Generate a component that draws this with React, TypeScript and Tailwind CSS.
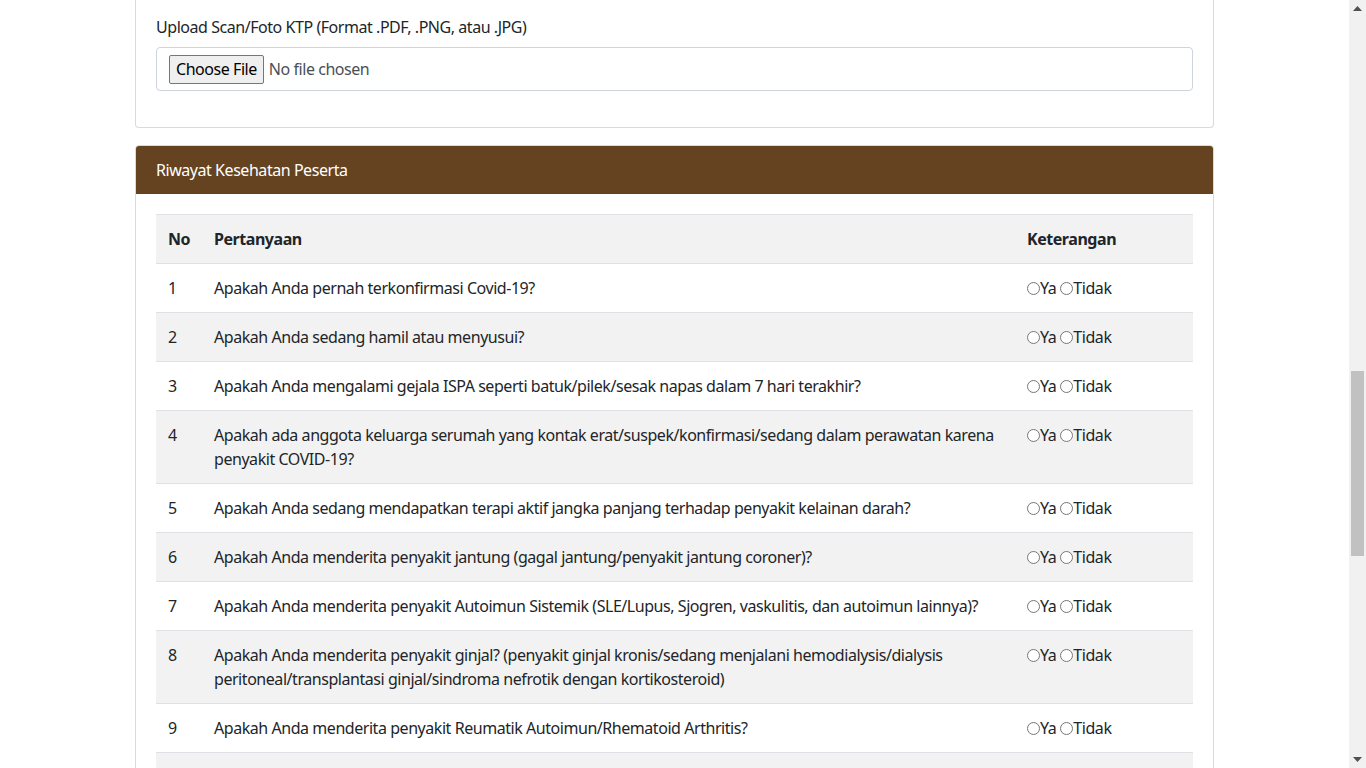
const questions: string[] = [
  "Apakah Anda pernah terkonfirmasi Covid-19?",
  "Apakah Anda sedang hamil atau menyusui?",
  "Apakah Anda mengalami gejala ISPA seperti batuk/pilek/sesak napas dalam 7 hari terakhir?",
  "Apakah ada anggota keluarga serumah yang kontak erat/suspek/konfirmasi/sedang dalam perawatan karena penyakit COVID-19?",
  "Apakah Anda sedang mendapatkan terapi aktif jangka panjang terhadap penyakit kelainan darah?",
  "Apakah Anda menderita penyakit jantung (gagal jantung/penyakit jantung coroner)?",
  "Apakah Anda menderita penyakit Autoimun Sistemik (SLE/Lupus, Sjogren, vaskulitis, dan autoimun lainnya)?",
  "Apakah Anda menderita penyakit ginjal? (penyakit ginjal kronis/sedang menjalani hemodialysis/dialysis peritoneal/transplantasi ginjal/sindroma nefrotik dengan kortikosteroid)",
  "Apakah Anda menderita penyakit Reumatik Autoimun/Rhematoid Arthritis?",
];

function Scrollbar() {
  return (
    <div className="w-[17px] h-screen bg-[#f1f1f1] flex flex-col items-center shrink-0">
      <div className="h-[17px] flex items-center justify-center">
        <svg width="9" height="5" viewBox="0 0 9 5">
          <path d="M4.5 0 L9 5 L0 5 Z" fill="#505050" />
        </svg>
      </div>
      <div className="flex-1 w-full px-[2px]">
        <div className="mt-[354px] h-[185px] bg-[#c1c1c1]" />
      </div>
      <div className="h-[17px] flex items-center justify-center">
        <svg width="9" height="5" viewBox="0 0 9 5">
          <path d="M0 0 L9 0 L4.5 5 Z" fill="#505050" />
        </svg>
      </div>
    </div>
  );
}

function YaTidak({ name }: { name: string }) {
  return (
    <div className="flex items-center">
      <input type="radio" name={name} className="m-0 w-[13px] h-[13px]" />
      <span>Ya</span>
      <span className="w-[4px]" />
      <input type="radio" name={name} className="m-0 w-[13px] h-[13px]" />
      <span>Tidak</span>
    </div>
  );
}

export default function App() {
  return (
    <div
      className="flex h-screen overflow-hidden bg-white text-[#212529] text-base leading-6 tracking-[-0.45px]"
      style={{ fontFamily: '"Noto Sans", "Open Sans", sans-serif' }}
    >
      <div className="flex-1 overflow-hidden">
        <div className="w-[1079px] mx-auto">
          {/* upload ktp */}
          <div className="border-x border-b border-[#dadada] rounded-b-[4px] px-5 pt-[15px] pb-5">
            <div className="mb-4">
              <div className="mb-2">Upload Scan/Foto KTP (Format .PDF, .PNG, atau .JPG)</div>
              <div className="h-[44px] border border-[#ced4da] rounded-[4px] px-3 flex items-center">
                <button className="h-[29px] px-[6px] border border-[#767676] rounded-[2px] bg-[#efefef] text-[#000]">
                  Choose File
                </button>
                <span className="ml-[5px] text-[#495057]">No file chosen</span>
              </div>
            </div>
          </div>

          {/* riwayat kesehatan */}
          <div className="mt-[17px] border border-[#dadada] rounded-[4px]">
            <div className="bg-[#654321] text-white px-5 py-3 rounded-t-[3px]">Riwayat Kesehatan Peserta</div>
            <div className="p-5">
              <table className="w-full table-fixed border-collapse">
                <colgroup>
                  <col className="w-[46px]" />
                  <col />
                  <col className="w-[178px]" />
                </colgroup>
                <thead>
                  <tr className="bg-[#f2f2f2]">
                    <th className="text-left font-bold px-3 py-3 border-t border-[#dee2e6]">No</th>
                    <th className="text-left font-bold px-3 py-3 border-t border-[#dee2e6]">Pertanyaan</th>
                    <th className="text-left font-bold px-3 py-3 border-t border-[#dee2e6]">Keterangan</th>
                  </tr>
                </thead>
                <tbody>
                  {questions.map((q, i) => (
                    <tr key={i} className={i % 2 === 1 ? "bg-[#f2f2f2]" : "bg-white"}>
                      <td className="align-top px-3 py-3 border-t border-[#dee2e6]">{i + 1}</td>
                      <td className="align-top px-3 py-3 border-t border-[#dee2e6]">{q}</td>
                      <td className="align-top px-3 py-3 border-t border-[#dee2e6]">
                        <YaTidak name={`q${i + 1}`} />
                      </td>
                    </tr>
                  ))}
                  {/* next row, below the fold */}
                  <tr className="bg-[#f2f2f2]">
                    <td colSpan={3} className="h-[49px] border-t border-[#dee2e6]" />
                  </tr>
                </tbody>
              </table>
            </div>
          </div>
        </div>
      </div>
      <Scrollbar />
    </div>
  );
}
